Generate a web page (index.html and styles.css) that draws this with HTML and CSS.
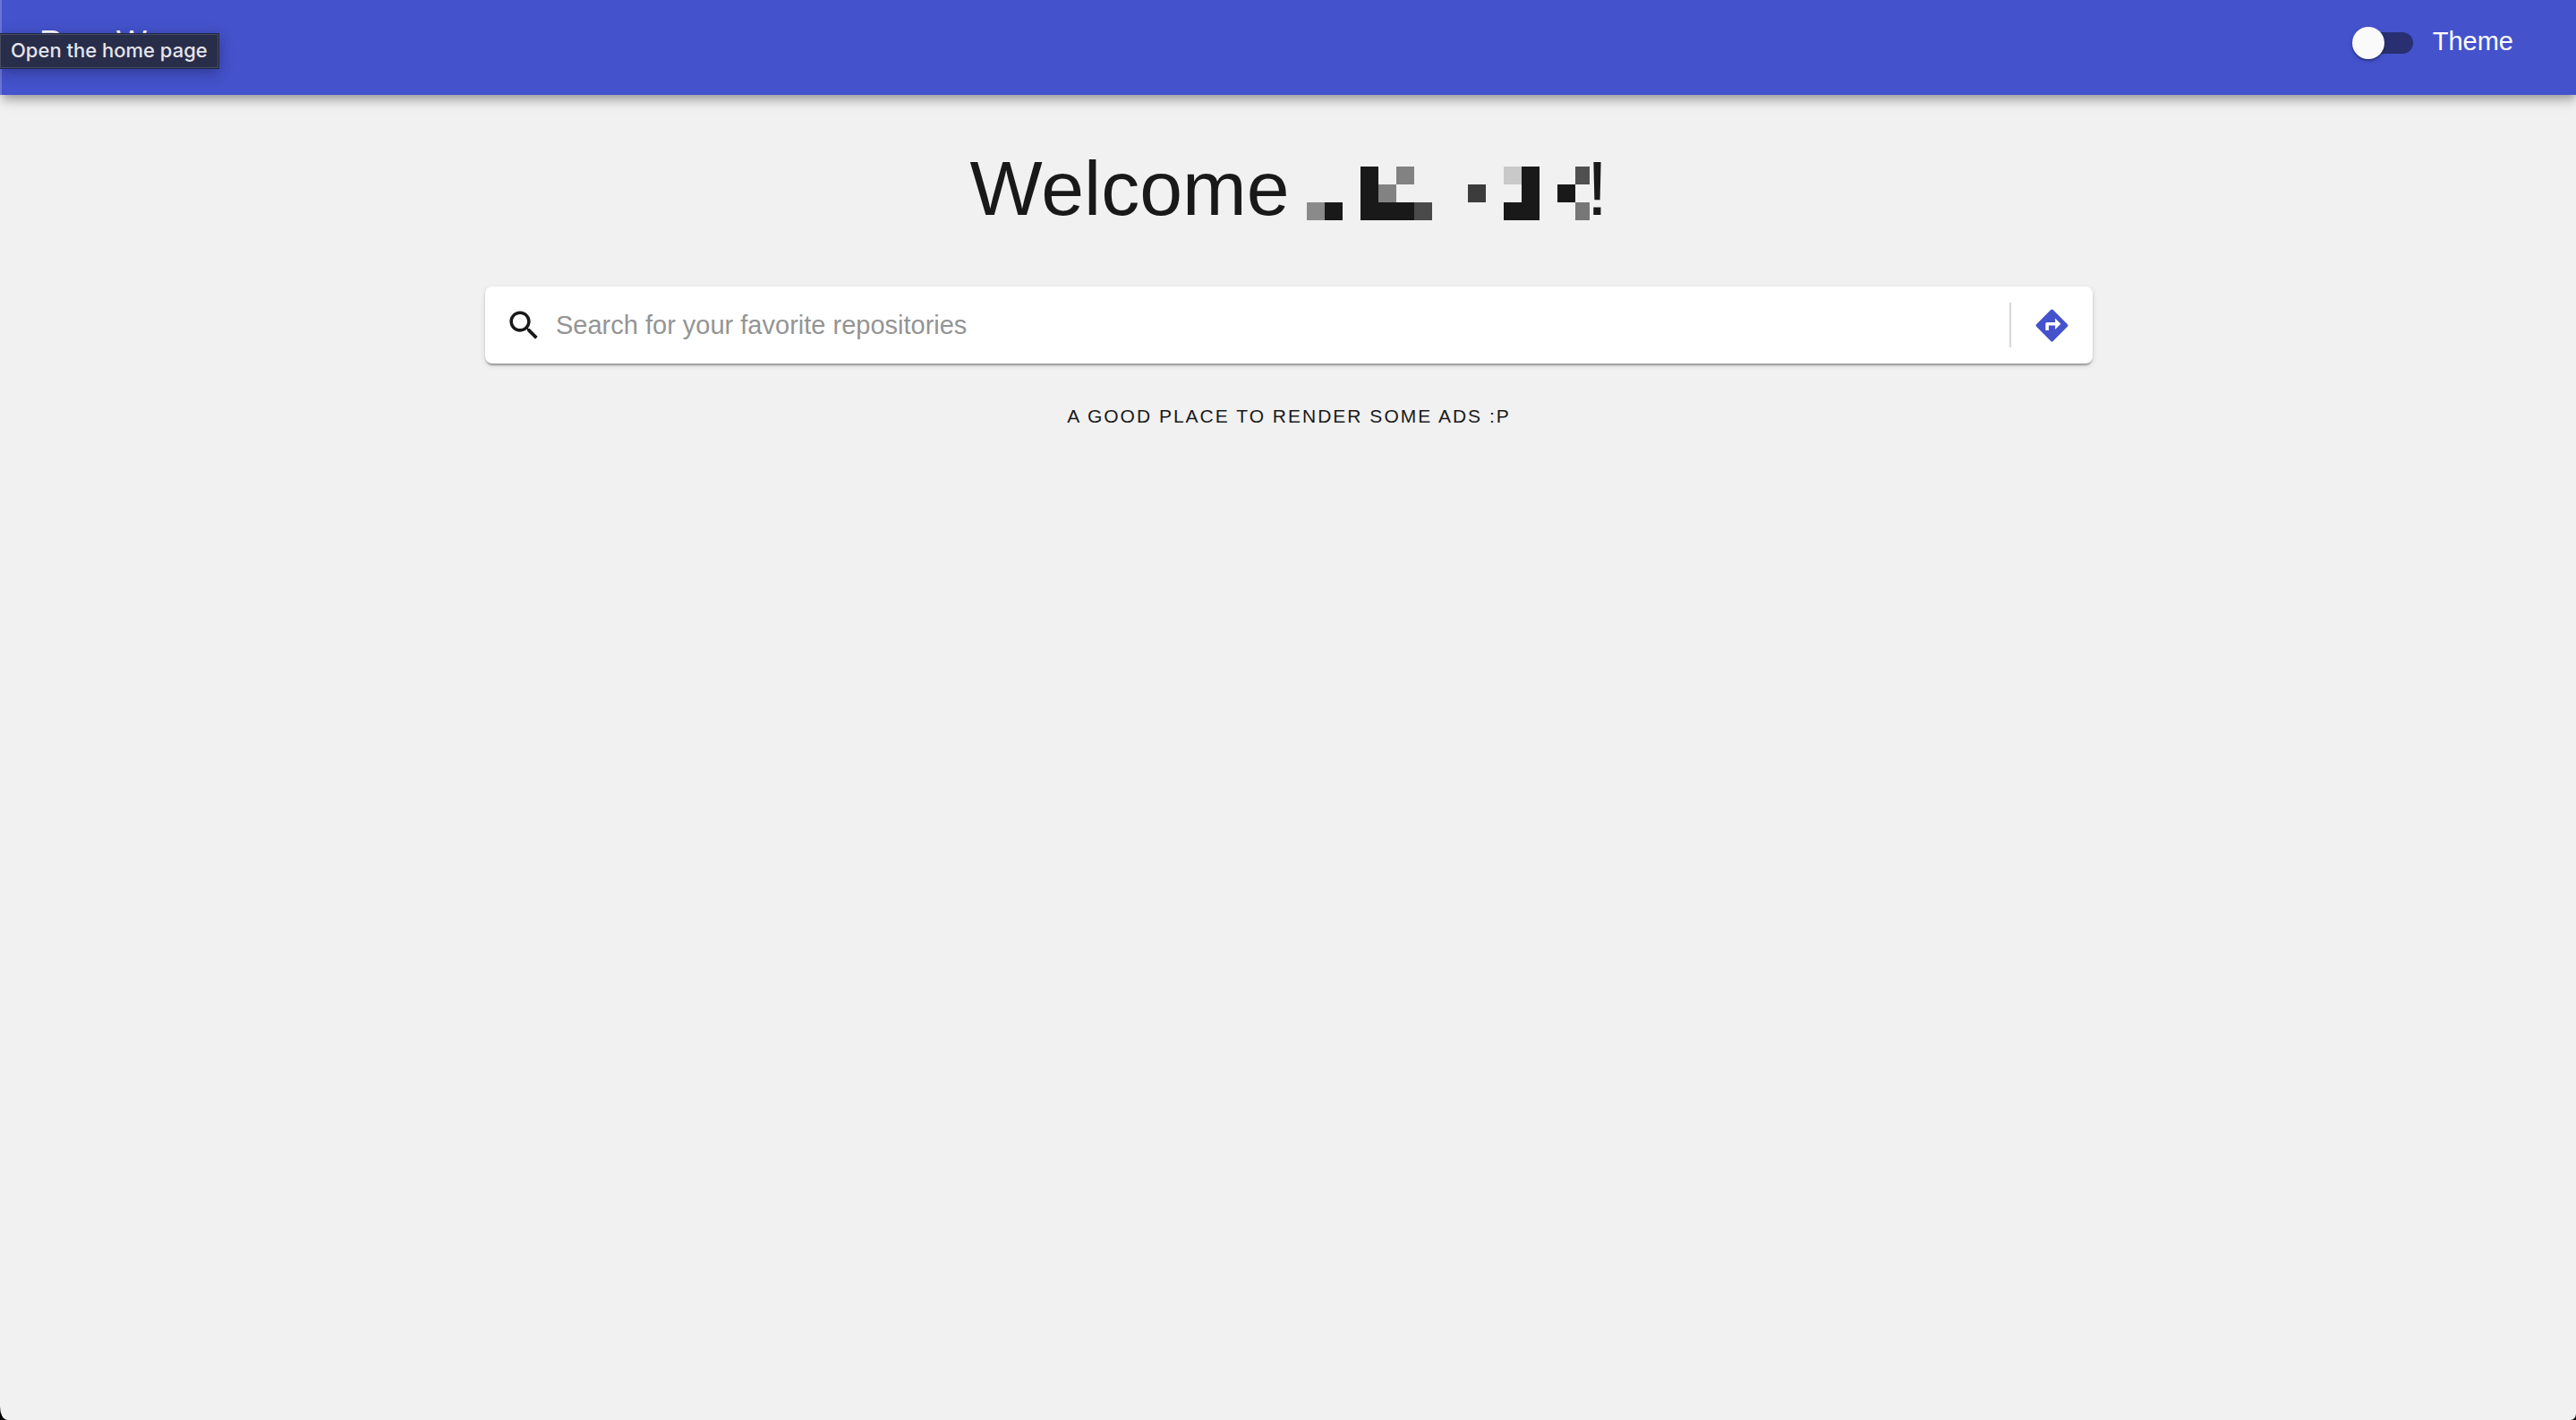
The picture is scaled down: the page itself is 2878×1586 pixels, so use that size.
FILE: index.html
```html
<!DOCTYPE html>
<html lang="en">
<head>
  <meta charset="utf-8">
  <meta name="viewport" content="width=device-width, initial-scale=1">
  <title>Repositories</title>
  <link rel="stylesheet" href="styles.css">
</head>
<body>
  <div class="page">
    <header class="app-bar">
      <a class="brand" href="/" aria-describedby="home-tip">RepoW</a>
      <label class="theme" for="theme-switch">
        <input class="switch" type="checkbox" role="switch" id="theme-switch">
        <span class="theme-label">Theme</span>
      </label>
      <div class="tooltip" role="tooltip" id="home-tip">Open the home page</div>
    </header>
    <main class="content">
      <h1 class="welcome">
        <span>Welcome</span>
        <svg class="masked-name" viewBox="0 0 316 60" aria-hidden="true" shape-rendering="crispEdges">
          <path fill="#191919" d="M20 40h20v20H20zM60 0h20v40h40v20H60zM240 0h20v60h-40V40h20zM280 20h20v20h-20z"/>
          <path fill="#8a8a8a" d="M0 40h20v20H0z"/>
          <path fill="#828282" d="M80 20h20v20H80zM100 0h20v20h-20z"/>
          <path fill="#4a4a4a" d="M120 40h20v20h-20z"/>
          <path fill="#3c3c3c" d="M180 20h20v20h-20z"/>
          <path fill="#c9c9c9" d="M220 0h20v20h-20z"/>
          <path fill="#505050" d="M300 0h16v20h-16z"/>
          <path fill="#777" d="M300 40h16v20h-16z"/>
        </svg>
        <span>!</span>
      </h1>
      <form class="search" role="search">
        <svg class="icon" viewBox="0 0 24 24" aria-hidden="true"><path d="M15.5 14h-.79l-.28-.27C15.41 12.59 16 11.11 16 9.5 16 5.91 13.09 3 9.5 3S3 5.91 3 9.5 5.91 16 9.5 16c1.61 0 3.09-.59 4.23-1.57l.27.28v.79l5 4.99L20.49 19l-4.99-5zm-6 0C7.01 14 5 11.99 5 9.5S7.01 5 9.5 5 14 7.01 14 9.5 11.99 14 9.5 14z"/></svg>
        <input class="search-input" type="text" placeholder="Search for your favorite repositories" aria-label="Search for your favorite repositories">
        <button class="go" type="submit" aria-label="Search">
          <svg class="icon" viewBox="0 0 24 24" aria-hidden="true"><path d="M21.71 11.29l-9-9c-.39-.39-1.02-.39-1.41 0l-9 9c-.39.39-.39 1.02 0 1.41l9 9c.39.39 1.02.39 1.41 0l9-9c.39-.38.39-1.01 0-1.41zM14 14.5V12h-4v3H8v-4c0-.55.45-1 1-1h5V7.5l3.5 3.5-3.5 3.5z"/></svg>
        </button>
      </form>
      <p class="overline">A good place to render some ads :P</p>
    </main>
  </div>
</body>
</html>
```
FILE: styles.css
```css
* {
  box-sizing: border-box;
}

html {
  background: #000;
}

body {
  margin: 0;
  font-family: "Liberation Sans", Arial, sans-serif;
  font-size: 29px;
  color: #191919;
}

.page {
  position: relative;
  min-height: 100vh;
  padding-left: 2px;
  background: #f1f1f1;
  border-bottom-left-radius: 8px 15px;
  border-bottom-right-radius: 6px 7px;
}

/* light edge of the window frame */
.page::before {
  content: "";
  position: absolute;
  inset: 0 auto 0 0;
  z-index: 2;
  width: 2px;
  height: 106px;
  background: #6a75d6;
}

.app-bar {
  position: relative;
  display: flex;
  align-items: center;
  justify-content: space-between;
  height: 106px;
  padding: 0 70px 10px 42px;
  background: #4452cc;
  color: #fff;
  box-shadow: 0 4px 8px -2px rgba(0, 0, 0, 0.2), 0 8px 10px rgba(0, 0, 0, 0.14), 0 2px 20px rgba(0, 0, 0, 0.12);
}

.brand {
  color: inherit;
  font-size: 36px;
  line-height: 58px;
  text-decoration: none;
}

.tooltip {
  position: absolute;
  top: 37px;
  left: -2px;
  z-index: 3;
  padding: 0 12px 2px;
  border: 1px solid #202541;
  border-left: 0;
  background: #282d4a;
  box-shadow: inset 0 0 0 1px #474c62, 0 4px 16px rgba(0, 0, 0, 0.3);
  color: #e4e5ea;
  font: 500 22px/36px Inter, sans-serif;
  white-space: nowrap;
}

.theme {
  display: flex;
  align-items: center;
  gap: 22px;
}

.theme-label {
  padding-bottom: 4px;
  line-height: 40px;
}

.switch {
  appearance: none;
  position: relative;
  width: 68px;
  height: 24px;
  margin: 0;
  border-radius: 12px;
  background: #283072;
}

.switch::before {
  content: "";
  position: absolute;
  top: -6px;
  left: 0;
  width: 36px;
  height: 36px;
  border-radius: 50%;
  background: #fafafa;
  box-shadow: 0 2px 2px rgba(0, 0, 0, 0.3), 0 2px 6px rgba(0, 0, 0, 0.12);
}

.switch:checked::before {
  left: 32px;
}

.content {
  display: flex;
  flex-direction: column;
  align-items: center;
  padding: 54px 32px;
}

.welcome {
  display: flex;
  margin: 0 0 60px;
  font-size: 86px;
  font-weight: 400;
  line-height: 100px;
}

.masked-name {
  align-self: flex-end;
  width: 316px;
  height: 60px;
  margin: 0 -4px 14px 20px;
}

.search {
  display: flex;
  align-items: center;
  width: 100%;
  max-width: 1796px;
  height: 86px;
  padding: 0 24px 0 22px;
  border-radius: 8px;
  background: #fff;
  box-shadow: 0 4px 2px -2px rgba(0, 0, 0, 0.2), 0 2px 2px rgba(0, 0, 0, 0.14), 0 2px 6px rgba(0, 0, 0, 0.12);
}

.icon {
  display: block;
  flex: none;
  width: 43px;
  height: 43px;
  fill: currentColor;
}

.search-input {
  flex: 1;
  min-width: 0;
  height: 58px;
  margin-left: 14px;
  padding: 0;
  border: 0;
  outline: 0;
  background: none;
  color: inherit;
  font: inherit;
}

.search-input::placeholder {
  color: #949494;
  opacity: 1;
}

.go {
  height: 50px;
  padding: 0 0 0 24px;
  border: 0;
  border-left: 2px solid #d8d8d8;
  background: none;
  color: #4452cc;
}

.overline {
  margin: 30px 0 0;
  font-size: 21px;
  line-height: 58px;
  letter-spacing: 2px;
  text-transform: uppercase;
}
```
